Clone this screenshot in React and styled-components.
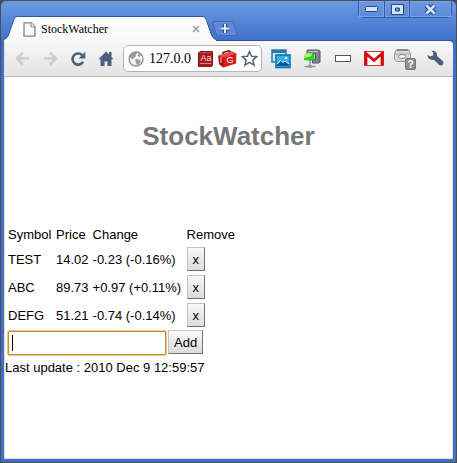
import React, { useState } from "react";
import styled, { createGlobalStyle } from "styled-components";

const quotes = [
  { symbol: "TEST", price: "14.02", change: "-0.23 (-0.16%)" },
  { symbol: "ABC", price: "89.73", change: "+0.97 (+0.11%)" },
  { symbol: "DEFG", price: "51.21", change: "-0.74 (-0.14%)" },
];

export default function App() {
  const [stocks, setStocks] = useState(quotes);
  const [symbol, setSymbol] = useState("");
  const [address, setAddress] = useState("127.0.0");

  const addStock = (e) => {
    e.preventDefault();
    const name = symbol.trim().toUpperCase();
    if (!name || stocks.some((s) => s.symbol === name)) return;
    setStocks([...stocks, { symbol: name, price: "0.00", change: "0.00 (0.00%)" }]);
    setSymbol("");
  };

  const removeStock = (name) => {
    setStocks(stocks.filter((s) => s.symbol !== name));
  };

  return (
    <>
      <GlobalStyle />
      <Window>
        <TitleBar>
          <Tab>
            <TabEdge side="left" />
            <TabBody>
              <PageIcon />
              <TabTitle>StockWatcher</TabTitle>
              <CloseTab type="button" aria-label="Close tab">
                <svg width="8" height="8" viewBox="0 0 8 8">
                  <path d="M1 1L7 7M7 1L1 7" stroke="#a3a3a3" strokeWidth="1.6" />
                </svg>
              </CloseTab>
            </TabBody>
            <TabEdge side="right" />
          </Tab>
          <NewTab type="button" aria-label="New tab">
            <NewTabIcon />
          </NewTab>
          <Controls>
            <Control type="button" aria-label="Minimize">
              <svg width="13" height="6" viewBox="0 0 13 6">
                <rect x=".5" y=".5" width="12" height="5" rx="1" fill="#d5e2f8" stroke="#27478a" />
              </svg>
            </Control>
            <Control type="button" aria-label="Maximize">
              <svg width="13" height="11" viewBox="0 0 13 11">
                <path
                  d="M.5.5h12v10H.5zM4.500 4v3h4V4z"
                  fill="#d5e2f8"
                  fillRule="evenodd"
                  stroke="#27478a"
                />
              </svg>
            </Control>
            <Control type="button" aria-label="Close" $wide>
              <svg width="13" height="11" viewBox="0 0 13 11">
                <path d="M2.500 1.500L10.500 9.500M10.500 1.500L2.500 9.500" stroke="#27478a" strokeWidth="5" />
                <path d="M2.500 1.500L10.500 9.500M10.500 1.500L2.500 9.500" stroke="#d5e2f8" strokeWidth="2.600" />
              </svg>
            </Control>
          </Controls>
        </TitleBar>

        <Toolbar>
          <NavButton type="button" aria-label="Back">
            <ArrowIcon />
          </NavButton>
          <NavButton type="button" aria-label="Forward">
            <ArrowIcon forward />
          </NavButton>
          <NavButton type="button" aria-label="Reload">
            <ReloadIcon />
          </NavButton>
          <NavButton type="button" aria-label="Home">
            <HomeIcon />
          </NavButton>
          <AddressBar>
            <GlobeIcon />
            <AddressInput
              aria-label="Address"
              value={address}
              onChange={(e) => setAddress(e.target.value)}
            />
            <AddressIcon type="button" aria-label="Dictionary">
              <DictionaryIcon />
            </AddressIcon>
            <AddressIcon type="button" aria-label="GWT">
              <ToolboxIcon />
            </AddressIcon>
            <AddressIcon type="button" aria-label="Bookmark">
              <StarIcon />
            </AddressIcon>
          </AddressBar>
          <ExtensionButton type="button" aria-label="Pictures">
            <PicturesIcon />
          </ExtensionButton>
          <ExtensionButton type="button" aria-label="Proxy">
            <ProxyIcon />
          </ExtensionButton>
          <ExtensionButton type="button" aria-label="Bar">
            <svg width="16" height="7" viewBox="0 0 16 7">
              <rect x=".5" y=".5" width="15" height="6" fill="#fff" stroke="#555" />
            </svg>
          </ExtensionButton>
          <ExtensionButton type="button" aria-label="Mail">
            <MailIcon />
          </ExtensionButton>
          <ExtensionButton type="button" aria-label="Notifier" $wide>
            <NotifierIcon />
          </ExtensionButton>
          <NavButton type="button" aria-label="Settings">
            <WrenchIcon />
          </NavButton>
        </Toolbar>

        <Page>
          <Title>StockWatcher</Title>
          <StockTable>
            <colgroup>
              <Column $width={46} />
              <Column $width={33} />
              <Column $width={92} />
              <Column $width={51} />
            </colgroup>
            <thead>
              <tr>
                <th>Symbol</th>
                <th>Price</th>
                <th>Change</th>
                <th>Remove</th>
              </tr>
            </thead>
            <tbody>
              {stocks.map((s) => (
                <tr key={s.symbol}>
                  <td>{s.symbol}</td>
                  <td>{s.price}</td>
                  <td>{s.change}</td>
                  <td>
                    <Button
                      type="button"
                      aria-label={"Remove " + s.symbol}
                      onClick={() => removeStock(s.symbol)}
                    >
                      x
                    </Button>
                  </td>
                </tr>
              ))}
            </tbody>
          </StockTable>
          <AddForm onSubmit={addStock}>
            <SymbolInput
              aria-label="Symbol"
              value={symbol}
              onChange={(e) => setSymbol(e.target.value)}
            />
            <Button type="submit">Add</Button>
          </AddForm>
          <LastUpdate>Last update : 2010 Dec 9 12:59:57</LastUpdate>
        </Page>
      </Window>
    </>
  );
}

function TabEdge({ side }) {
  return (
    <svg width="14" height="25" viewBox="0 0 14 25">
      <g transform={side === "right" ? "translate(14 0) scale(-1 1)" : undefined}>
        <path
          d="M0 25V23.500C3 22.500 4 20.500 5 17.500L9.500 4.500C10.500 1.500 12 .5 14 .5V25z"
          fill="#fbfbfb"
        />
        <path
          d="M0 23.500C3 22.500 4 20.500 5 17.500L9.500 4.500C10.500 1.500 12 .5 14 .5"
          fill="none"
          stroke="#2f569f"
        />
      </g>
    </svg>
  );
}

function PageIcon() {
  return (
    <svg width="13" height="15" viewBox="0 0 13 15">
      <path d="M1 .8h7.200L12 4.600v9.600H1z" fill="#fafafa" stroke="#858585" strokeWidth="1.300" />
      <path d="M8 1v4h4" fill="#fff" stroke="#858585" />
    </svg>
  );
}

function NewTabIcon() {
  return (
    <svg width="26" height="16" viewBox="0 0 26 16">
      <path
        d="M2.500 .5h15.500c2.500 0 3.500 1 4.200 3l2.600 8.500c.6 2-.3 2.500-1.800 2.500H7.500c-2 0-3-1-3.700-3L1 3C.5 1.500 1 .5 2.500 .5z"
        fill="#6089d4"
        stroke="#3f69b8"
      />
      <path d="M13 3v9M8.500 7.500h9" stroke="#294c90" strokeWidth="4" />
      <path d="M13 3v9M8.500 7.500h9" stroke="#e2ebfa" strokeWidth="2" />
    </svg>
  );
}

function ArrowIcon({ forward }) {
  return (
    <svg width="15" height="15" viewBox="0 0 15 15">
      <path
        transform={forward ? "translate(15 0) scale(-1 1)" : undefined}
        d="M8 1.500L2 7.500L8 13.500M2.500 7.500H14"
        fill="none"
        stroke="#cbced3"
        strokeWidth="2.600"
      />
    </svg>
  );
}

function ReloadIcon() {
  return (
    <svg width="16" height="16" viewBox="0 0 16 16">
      <path
        d="M12.300 4.300A5.600 5.600 0 1 0 13 10.800"
        fill="none"
        stroke="#4d5f7b"
        strokeWidth="2.600"
      />
      <path d="M15.300 .8V7.500H8.600z" fill="#4d5f7b" />
    </svg>
  );
}

function HomeIcon() {
  return (
    <svg width="16" height="16" viewBox="0 0 16 16">
      <path
        d="M8 .5L.5 8.300h2V15h4v-4.500h3V15h4V8.300h2L13.500 6V1h-2.500v2.600z"
        fill="#4d5f7b"
      />
    </svg>
  );
}

function GlobeIcon() {
  return (
    <svg width="16" height="16" viewBox="0 0 16 16">
      <circle cx="8" cy="8" r="7" fill="#f4f4f4" stroke="#8e8e8e" strokeWidth="1.300" />
      <path
        d="M2 5.500C3 3 5 1.700 7.500 1.700L9 3 7.500 4 8 5.500 6 6.500 5 8.500 3.500 7.500 2 7zM10.500 2.500l2.500 2-1.500 1.500-1.500-1zM7 8.500l3-.5 3 2-1.500 2.500-2.500 2-1-3z"
        fill="#9b9b9b"
      />
    </svg>
  );
}

function DictionaryIcon() {
  return (
    <svg width="16" height="16" viewBox="0 0 16 16">
      <path d="M2 .5h12.500v14l-1 1H.5V2z" fill="#a81d1d" stroke="#7c1717" />
      <path d="M2 12.500h11.500" stroke="#d08a8a" />
      <path d="M2.500 1.500h11" stroke="#c75050" />
      <text
        x="8"
        y="10"
        fill="#f6dede"
        fontFamily="Liberation Sans, sans-serif"
        fontSize="9"
        textAnchor="middle"
      >
        Aa
      </text>
    </svg>
  );
}

function ToolboxIcon() {
  return (
    <svg width="19" height="18" viewBox="0 0 19 18">
      <path d="M5 5V2.500L11 .8l2 1.700" fill="none" stroke="#70191c" strokeWidth="1.600" />
      <path d="M.5 5.500L14 1.500l4.500 2-.5 10L5.500 17.500 1 14z" fill="#d81c22" />
      <path d="M.5 5.500l4.500 2 .5 10L1 14z" fill="#a60f16" />
      <path d="M.5 5.500L14 1.500l4.500 2L5 7.500z" fill="#ef4a48" />
      <path d="M3 7v6" stroke="#f3b3ae" strokeWidth="1.200" />
      <text
        x="12"
        y="13"
        fill="#fff"
        fontFamily="Liberation Sans, sans-serif"
        fontSize="9"
        textAnchor="middle"
      >
        G
      </text>
    </svg>
  );
}

function StarIcon() {
  return (
    <svg width="17" height="17" viewBox="0 0 17 17">
      <path
        d="M8.500 1.500L10.600 6.200L15.700 6.600L11.800 10.100L13.100 15.200L8.500 12.400L3.900 15.200L5.200 10.100L1.300 6.600L6.400 6.200z"
        fill="#fff"
        stroke="#5b6678"
        strokeWidth="1.500"
      />
    </svg>
  );
}

function PicturesIcon() {
  return (
    <svg width="20" height="20" viewBox="0 0 20 20">
      <rect x="1" y="1" width="14" height="12" fill="#c4e2ef" stroke="#3b80a6" strokeWidth="1.600" />
      <rect x="1" y="1" width="14" height="3" fill="#2877a5" />
      <rect x="5" y="6" width="14" height="12.500" fill="#38b0ec" stroke="#0a78bb" strokeWidth="1.600" />
      <path d="M6 15.500l4-4 2.500 2 2-1 3.500 3V17H6z" fill="#075e96" />
      <path d="M6 15l3.500-3.500 2.500 2 2-1.500 4 3" fill="none" stroke="#d9f1fc" />
      <circle cx="15" cy="9" r="1.300" fill="#e9f8ff" />
    </svg>
  );
}

function ProxyIcon() {
  return (
    <svg width="18" height="20" viewBox="0 0 18 20">
      <path d="M4 1h11.500l1.500 1v11l-1.500 1H9.500v-3.500h3V4.500H4z" fill="#7d8790" stroke="#4d5962" />
      <path d="M5.500 2.500H15" stroke="#bdc5ca" />
      <path d="M1 5.500L4.500 4l7 .5v6L8 12l-7-1z" fill="#35c52e" />
      <path d="M1 5.500L4.500 4l5 .5L8 7.500 1 9z" fill="#a0f56f" />
      <path d="M7 12v4M1.500 17.500h11" stroke="#8b9aa6" strokeWidth="1.500" />
      <rect x="5.500" y="16" width="3" height="3" fill="#8497a5" />
    </svg>
  );
}

function MailIcon() {
  return (
    <svg width="20" height="15" viewBox="0 0 20 15">
      <rect x=".5" y=".5" width="19" height="14" fill="#fff" stroke="#cf3433" />
      <path d="M4 12l4-4M16 12l-4-4" stroke="#ddd" />
      <path d="M2 14V2.500l8 7 8-7V14" fill="none" stroke="#d40b0e" strokeWidth="2.800" />
    </svg>
  );
}

function NotifierIcon() {
  return (
    <svg width="24" height="22" viewBox="0 0 24 22">
      <path d="M3.500 1.500h12l2 4v6l-2 2h-12l-2-2v-6z" fill="#d7d7d7" stroke="#999" />
      <path d="M4 2h11" stroke="#888" strokeWidth="2" />
      <path d="M2 6h15" stroke="#a6a6a6" />
      <ellipse cx="9" cy="8.500" rx="3.500" ry="2" fill="#f6f6f6" stroke="#888" />
      <rect x="12.500" y="10.500" width="10" height="11" rx="1.500" fill="#919191" stroke="#777" />
      <text
        x="17.500"
        y="19.500"
        fill="#fff"
        fontFamily="Liberation Sans, sans-serif"
        fontSize="10"
        fontWeight="bold"
        textAnchor="middle"
      >
        ?
      </text>
    </svg>
  );
}

function WrenchIcon() {
  return (
    <svg width="17" height="17" viewBox="0 0 17 17">
      <path
        d="M4.500 .8C8 0 10.600 2.500 10 6l5.800 5c2 2.500-1.200 6-3.800 3.800L6.800 9.700C3.500 10.500 .2 8.500 .6 5L3.500 6.500 6.200 5.300 6.300 2.800z"
        fill="#4d5f7b"
      />
    </svg>
  );
}

const GlobalStyle = createGlobalStyle`
  * {
    box-sizing: border-box;
  }

  body {
    margin: 0;
    background: #4b4b4b;
    font-family: "Liberation Sans", Arial, sans-serif;
    font-size: 13px;
    color: #000;
  }

  svg {
    display: block;
    flex-shrink: 0;
  }
`;

const Window = styled.div`
  display: flex;
  flex-direction: column;
  min-height: 100vh;
  padding: 0 3px 3px;
  border: 1px solid #4b4f58;
  border-radius: 6px 6px 2px 2px;
  background: linear-gradient(#6c9be2, #3f6fc9 40px);
`;

const TitleBar = styled.div`
  display: flex;
  align-items: flex-end;
  height: 40px;
  box-shadow: inset 0 -1px #2f569f;
`;

const Tab = styled.div`
  display: flex;
  flex: 0 1 212px;
  min-width: 0;
`;

const TabBody = styled.div`
  display: flex;
  flex: 1;
  align-items: center;
  min-width: 0;
  height: 25px;
  padding: 0 0 0 5px;
  border-top: 1px solid #2f569f;
  background: linear-gradient(#fff, #f8f8f8);
`;

const TabTitle = styled.span`
  flex: 1;
  overflow: hidden;
  margin-left: 5px;
  font-family: "Liberation Serif", "Times New Roman", serif;
  font-size: 12px;
  white-space: nowrap;
`;

const BareButton = styled.button`
  display: flex;
  align-items: center;
  justify-content: center;
  padding: 0;
  border: 0;
  background: none;
`;

const CloseTab = styled(BareButton)`
  width: 12px;
  height: 12px;
`;

const NewTab = styled(BareButton)`
  margin: 0 0 4px -4px;
`;

const Controls = styled.div`
  display: flex;
  align-self: flex-start;
  margin-left: auto;
  margin-right: 1px;
  border: 1px solid #3158a2;
  border-top: 0;
  border-radius: 0 0 5px 5px;
`;

const Control = styled(BareButton)`
  width: ${(props) => (props.$wide ? "42px" : "25px")};
  height: 16px;
  box-shadow: inset 0 0 0 1px #7ba3e4;

  & + & {
    border-left: 1px solid #3158a2;
  }
`;

const Toolbar = styled.div`
  display: flex;
  align-items: center;
  height: 36px;
  padding: 0 4px 0 3px;
  border-left: 1px solid #dfe3ea;
  border-bottom: 1px solid #b4b8bf;
  border-radius: 0 4px 0 0;
  background: linear-gradient(#f8f8f8, #e3e3e3);
`;

const NavButton = styled(BareButton)`
  width: 28px;
  height: 28px;
`;

const AddressBar = styled.div`
  display: flex;
  flex: 1;
  align-items: center;
  gap: 4px;
  min-width: 0;
  height: 27px;
  margin: 0 3px;
  padding: 0 3px 0 4px;
  border: 1px solid #b5b5b5;
  border-radius: 5px;
  background: #fff;
`;

const AddressInput = styled.input`
  flex: 1;
  width: 0;
  min-width: 0;
  padding: 0 0 0 1px;
  border: 0;
  outline: 0;
  background: none;
  font-family: "Liberation Serif", "Times New Roman", serif;
  font-size: 14px;
`;

const AddressIcon = styled(BareButton)`
  flex-shrink: 0;
`;

const ExtensionButton = styled(BareButton)`
  width: ${(props) => (props.$wide ? "32px" : "31px")};
  height: 28px;
`;

const Page = styled.main`
  flex: 1;
  border: 1px solid #dcdfd6;
  border-top: 0;
  background: #fff;
`;

const Title = styled.h1`
  margin: 43px 0 71px;
  color: #777;
  font-size: 26px;
  line-height: 32px;
  text-align: center;
`;

const StockTable = styled.table`
  border-collapse: separate;
  border-spacing: 2px;

  th,
  td {
    padding: 1px;
    font-weight: normal;
    line-height: 17px;
    text-align: left;
    white-space: nowrap;
  }
`;

const Column = styled.col`
  width: ${(props) => props.$width}px;
`;

const Button = styled.button`
  display: block;
  height: 24px;
  padding: 0 5px;
  border: 1px solid;
  border-color: #c3c3c3 #707070 #707070 #c3c3c3;
  background: linear-gradient(#f9f9f9, #dcdcdc);
  color: #000;
  font-family: inherit;
  font-size: 13px;
`;

const AddForm = styled.form`
  display: flex;
  gap: 1px;
  padding-left: 2px;
`;

const SymbolInput = styled.input`
  width: 160px;
  height: 26px;
  padding: 0 6px;
  border: 1px solid #ecc983;
  border-radius: 2px;
  outline: 0;
  background: linear-gradient(#000, #000) 4px center / 1px 16px no-repeat #fff;
  box-shadow: inset 0 0 0 1px #bf8f3c;
  font-family: inherit;
  font-size: 13px;

  &:focus {
    background-image: none;
  }
`;

const LastUpdate = styled.div`
  line-height: 24px;
`;
